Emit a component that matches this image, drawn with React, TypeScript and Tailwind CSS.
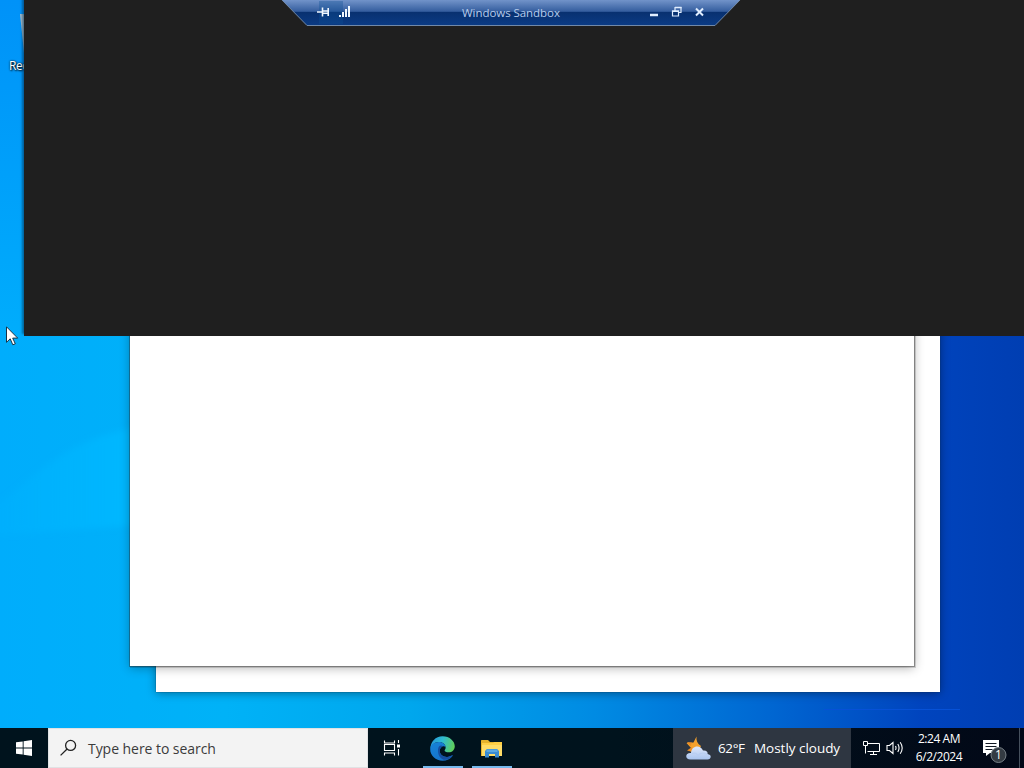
import React from 'react';

const WindowsLogo = () => (
  <svg width="16" height="16" viewBox="0 0 16 16" fill="#fff">
    <path d="M0 2.3 6.7 1.4V7.5H0zM7.6 1.3 16 0v7.5H7.6zM0 8.4h6.7v6.2L0 13.7zM7.6 8.4H16V16l-8.4-1.2z" />
  </svg>
);

const SearchIcon = () => (
  <svg width="18" height="18" viewBox="0 0 18 18" fill="none" stroke="#222" strokeWidth="1.3">
    <circle cx="10.6" cy="6.4" r="5" />
    <path d="M7.1 10 .6 16.4" />
  </svg>
);

const TaskViewIcon = () => (
  <svg width="18" height="18" viewBox="0 0 18 18" fill="none" stroke="#fff" strokeWidth="1.1">
    <path d="M1.5 1.5v2.500h10V1.5M1.5 16.5V14h10v2.5M1.5 5.500h10v6h-10zM15.5 1v3M15.5 10v6.5" />
    <path d="M14 5.500h3v3h-3z" fill="#fff" stroke="none" />
  </svg>
);

const EdgeIcon = () => (
  <svg className="mr-px" width="25" height="25" viewBox="0 0 24 24">
    <defs>
      <linearGradient id="edgeTop" x1="0" y1="0.2" x2="1" y2="0.4">
        <stop offset="0" stopColor="#2394dc" />
        <stop offset="0.5" stopColor="#2fbcd0" />
        <stop offset="1" stopColor="#5fce5c" />
      </linearGradient>
      <linearGradient id="edgeBase" x1="0" y1="0" x2="0.8" y2="1">
        <stop offset="0" stopColor="#1683d8" />
        <stop offset="1" stopColor="#1670c8" />
      </linearGradient>
    </defs>
    <path d="M.3 12.500C.3 5.400 5.400.2 12 .2c7 0 11.800 4.800 11.800 9.700 0 3.700-2.700 5.800-5.800 5.800-2.500 0-4-.9-4-1.800 0-.8 1-1.100 1-2.900 0-2.400-2.400-5.200-6.500-5.200C4.500 5.800 1.500 8.500.3 12.500z" fill="url(#edgeTop)" />
    <path d="M.2 12.500C.5 8.800 4 5.800 8.500 5.800c3.600 0 6.300 2.100 6.500 4.700-.8-.7-1.800-1-2.800-.6-2 .8-3.200 3-2.800 5.300.6 3.400 4.600 5.700 8.400 4.700 1.300-.3 2.500-.9 3.500-1.400.5-.2.7.2.5.5-2.300 3.100-5.700 4.800-9.700 4.800C5.500 23.800 0 18.800.2 12.500z" fill="url(#edgeBase)" />
    <path d="M7.700 13c.3-3.300 2.600-4.700 4.500-3.200-1.900.9-3.100 3-2.800 5.400.7 3.900 5.100 5.900 9.600 4.500 1-.3 2-.8 2.700-1-2.500 3.500-5.700 4.500-8.700 4-3.300-.9-5.600-4.700-5.300-9.700z" fill="#164e9f" />
  </svg>
);

const FolderIcon = () => (
  <svg width="22" height="20" viewBox="0 0 22 20">
    <path d="M0 2.500Q0 2 .7 2H7l2 2h12v14H0z" fill="#e7b32d" />
    <path d="M1 6h20v12H1z" fill="#ffdc67" />
    <path d="M1 5h11l1.500-1H21v3H1z" fill="#ffcf45" />
    <path d="M4 19.500V13l2-2h10l2 2v6.500h-4V16H8v3.500z" fill="#398bd1" />
    <path d="M5.500 11.500h11v2.500h-11z" fill="#5aa8e2" />
  </svg>
);

const WeatherIcon = () => (
  <svg width="27" height="25" viewBox="0 0 27 25">
    <defs>
      <linearGradient id="cloud" x1="0" y1="0" x2="0" y2="1">
        <stop offset="0" stopColor="#dfe8fb" />
        <stop offset="1" stopColor="#a9c4ef" />
      </linearGradient>
    </defs>
    <path d="M11.500.500c-.5 4 1 7.500 4.500 9.500-2 5-8 7.500-12 4.500 1.300-.5 2-1 2.500-2L1.500 7l7-.5z" fill="#f5a12c" />
    <path d="m2 6 5 .5-1.500 4zM2 14.500l5-3.500 1 5z" fill="#ed8f25" />
    <path d="M5.500 23.500C-.5 23.500 0 16.500 6 17c.5-8 9.500-8.500 12-2.500 4-.5 5 2 4.500 3.500 5 .8 3.500 5.500 0 5.500z" fill="url(#cloud)" />
    <path d="M7 17.500c3-1 5 0 6 2 2-3 6-3 9.500-1" fill="none" stroke="#b7cdf2" strokeWidth="1" />
  </svg>
);

const NetworkIcon = () => (
  <svg width="17" height="16" viewBox="0 0 17 16" fill="none" stroke="#fff" strokeWidth="1">
    <path d="M5 3.500h11.500v8H4.500M2.500 5.500v8M.500 1.500h4v4h-4zM10.500 11.500v3M7 14.500h7" />
  </svg>
);

const VolumeIcon = () => (
  <svg width="18" height="16" viewBox="0 0 18 16" fill="none" stroke="#fff" strokeWidth="1.1">
    <path d="M1 5.500h2.500L7 2.500v11L3.500 10.500H1zM9.500 6q1 2 0 4M11.800 4q2.500 4 0 8M14.200 2.200q4 5.800 0 11.600" />
  </svg>
);

const NotificationIcon = () => (
  <svg width="25" height="26" viewBox="0 0 25 26">
    <path d="M1 2h16v13H8l-4 3v-3H1z" fill="#fff" />
    <path d="M3.500 5.500h11M3.500 8.500h11M3.500 11.500h7" stroke="#111823" strokeWidth="1" />
    <circle cx="16.500" cy="17" r="7.500" fill="#343b43" stroke="#778087" strokeWidth="1" />
    <text x="16.500" y="21.300" textAnchor="middle" fill="#fff" fontSize="12" fontFamily="Open Sans, sans-serif">1</text>
  </svg>
);

// Remote session bar pinned to the top edge
const ConnectionBar = () => (
  <div className="absolute left-[281px] top-0 h-[27px] w-[460px]">
    <svg className="absolute inset-0" width="460" height="27" viewBox="0 0 460 27">
      <defs>
        <linearGradient id="bar" x1="0" y1="0" x2="0" y2="1">
          <stop offset="0" stopColor="#7798cd" />
          <stop offset="0.47" stopColor="#345d9e" />
          <stop offset="0.48" stopColor="#08306f" />
          <stop offset="1" stopColor="#0b3b84" />
        </linearGradient>
      </defs>
      <path d="M0-1h460L434 25.500H26z" fill="url(#bar)" stroke="#7189a8" strokeWidth="1" />
      <path d="M38 1h24v23H38z" fill="#0d5095" opacity=".35" />
    </svg>
    <div className="relative flex h-[25px] items-center text-white">
      <svg className="ml-[36px]" width="13" height="11" viewBox="0 0 13 11" fill="none" stroke="#f2f9ff" strokeWidth="1.6">
        <path d="M0 5h5M5.500.5v9M6 4h5M6 6.200h5M11.200 1v8" />
      </svg>
      <svg className="ml-2" width="13" height="13" viewBox="0 0 13 13" fill="#f2f9ff">
        <path d="M1 9h2v2H1zM4 6h2v5H4zM7 3h2v8H7zM10 0h2v11h-2z" />
      </svg>
      <span className="ml-[111px] w-[98px] whitespace-nowrap font-['Open_Sans',sans-serif] text-[11.5px] tracking-[-0.05px] text-[#b7cceb]">Windows Sandbox</span>
      <svg className="ml-[89px]" width="56" height="13" viewBox="0 0 56 13" fill="none" stroke="#e1eeff">
        <path d="M1 9h8" strokeWidth="2.5" />
        <path d="M23.500 5h6v5h-6zM26 4.500v-3h6v5h-2" strokeWidth="1.2" />
        <path d="M23 5.200h7M26 1.500h6.500" strokeWidth="1.5" />
        <path d="m47 2.500 7 7M54 2.500l-7 7" strokeWidth="2" />
      </svg>
    </div>
  </div>
);

const Taskbar = () => (
  <div className="flex h-10 shrink-0 bg-gradient-to-r from-[#00131d] via-[#00131d] via-60% to-[#020817] font-['Open_Sans',sans-serif]">
    <div className="flex w-12 items-center justify-center">
      <WindowsLogo />
    </div>
    <div className="flex w-80 items-center border border-[#e0e2e4] bg-[#f3f3f3] pl-[11px] text-[#3b3b3b]">
      <SearchIcon />
      <span className="ml-[10px] whitespace-nowrap text-[14px] tracking-[-0.05px]">Type here to search</span>
    </div>
    <div className="flex w-[49px] items-center justify-center pr-px">
      <TaskViewIcon />
    </div>
    <div className="ml-[6px] flex w-10 items-center justify-center border-b-2 border-[#76b9ed] pt-0.5">
      <EdgeIcon />
    </div>
    <div className="ml-[9px] flex w-10 items-center justify-center border-b-2 border-[#76b9ed] pt-0.5">
      <FolderIcon />
    </div>
    <div className="ml-auto flex w-[178px] items-center bg-[#2e3641] pl-3 text-[13.5px] text-white">
      <WeatherIcon />
      <span className="ml-[6px] w-9 whitespace-nowrap tracking-[-0.4px]">62°F</span>
      <span className="whitespace-nowrap tracking-[-0.03px]">Mostly cloudy</span>
    </div>
    <div className="flex w-[173px] items-center pl-3">
      <NetworkIcon />
      <span className="ml-[6px]"><VolumeIcon /></span>
      <div className="ml-[7px] w-[56px] whitespace-nowrap text-center text-[12px] leading-[18px] tracking-[-0.45px] text-white">
        <div>2:24 AM</div>
        <div>6/2/2024</div>
      </div>
      <span className="ml-[15px] mt-[5px]"><NotificationIcon /></span>
      <span className="ml-auto mr-[4px] h-full w-px bg-[#46505d]" />
    </div>
  </div>
);

export default function App() {
  return (
    <div className="flex h-[768px] w-[1024px] flex-col overflow-hidden">
      <div className="relative flex-1 overflow-hidden bg-[#00afff]">
        {/* Wallpaper */}
        <svg className="absolute inset-0" width="1024" height="728" viewBox="0 0 1024 728">
          <defs>
            <linearGradient id="sky" x1="0" y1="0" x2="1" y2="0">
              <stop offset="0" stopColor="#00adfc" />
              <stop offset="0.22" stopColor="#00b2f7" />
              <stop offset="0.4" stopColor="#00a7ed" />
              <stop offset="0.58" stopColor="#008be3" />
              <stop offset="0.75" stopColor="#0067d2" />
              <stop offset="0.9" stopColor="#0044be" />
              <stop offset="1" stopColor="#003eb2" />
            </linearGradient>
            <linearGradient id="leftTop" x1="0" y1="0" x2="0" y2="1">
              <stop offset="0" stopColor="#0092f8" />
              <stop offset="1" stopColor="#00adfc" />
            </linearGradient>
            <linearGradient id="glow" x1="0" y1="0" x2="1" y2="0">
              <stop offset="0" stopColor="#00b5ff" stopOpacity="0.2" />
              <stop offset="1" stopColor="#00b8ff" />
            </linearGradient>
            <filter id="soften" x="-20%" y="-20%" width="140%" height="140%">
              <feGaussianBlur stdDeviation="3" />
            </filter>
          </defs>
          <path d="M0 0h1024v728H0z" fill="url(#sky)" />
          <path d="M0 0h24v336H0z" fill="url(#leftTop)" />
          <path d="M-10 510C35 480 60 440 140 427v98L-10 535z" fill="url(#glow)" filter="url(#soften)" />
          <path d="M824 709.500h136" stroke="#0651d7" />
        </svg>

        {/* Recycle Bin, mostly hidden behind the dark window */}
        <svg className="absolute left-[19px] top-[13px]" width="40" height="42" viewBox="0 0 40 42">
          <path d="m1 1 34 1-5 38H5z" fill="#a9bfcb" />
        </svg>
        <span className="absolute left-[9px] top-[58px] whitespace-nowrap font-['Open_Sans',sans-serif] text-[12px] leading-4 tracking-[-0.4px] text-white [text-shadow:1px_1px_2px_#000,0_0_2px_#000]">Rec</span>

        <div className="absolute left-[156px] top-[60px] h-[632px] w-[784px] bg-white shadow-[0_1px_9px_rgba(0,0,0,0.4),0_0_1px_#163d60]" />
        <div className="absolute left-[130px] top-[34px] h-[632px] w-[784px] bg-white shadow-[0_2px_10px_rgba(0,0,0,0.3),0_0_0_1px_rgba(50,50,50,0.4),1px_1px_0_1px_rgba(0,0,0,0.14)]" />
        <div className="absolute left-6 top-0 h-[336px] w-[1000px] bg-[#1f1f1f] shadow-[-2px_-2px_2px_rgba(0,40,70,0.5)]" />

        <ConnectionBar />

        {/* Cursor */}
        <svg className="absolute left-[6px] top-[326px]" width="13" height="20" viewBox="0 0 13 20">
          <path d="M.5.8v15.500l3.700-3.500 2.600 6 2.500-1-2.600-5.700h5z" fill="#fff" stroke="#173347" strokeWidth="1" />
        </svg>
      </div>
      <Taskbar />
    </div>
  );
}
